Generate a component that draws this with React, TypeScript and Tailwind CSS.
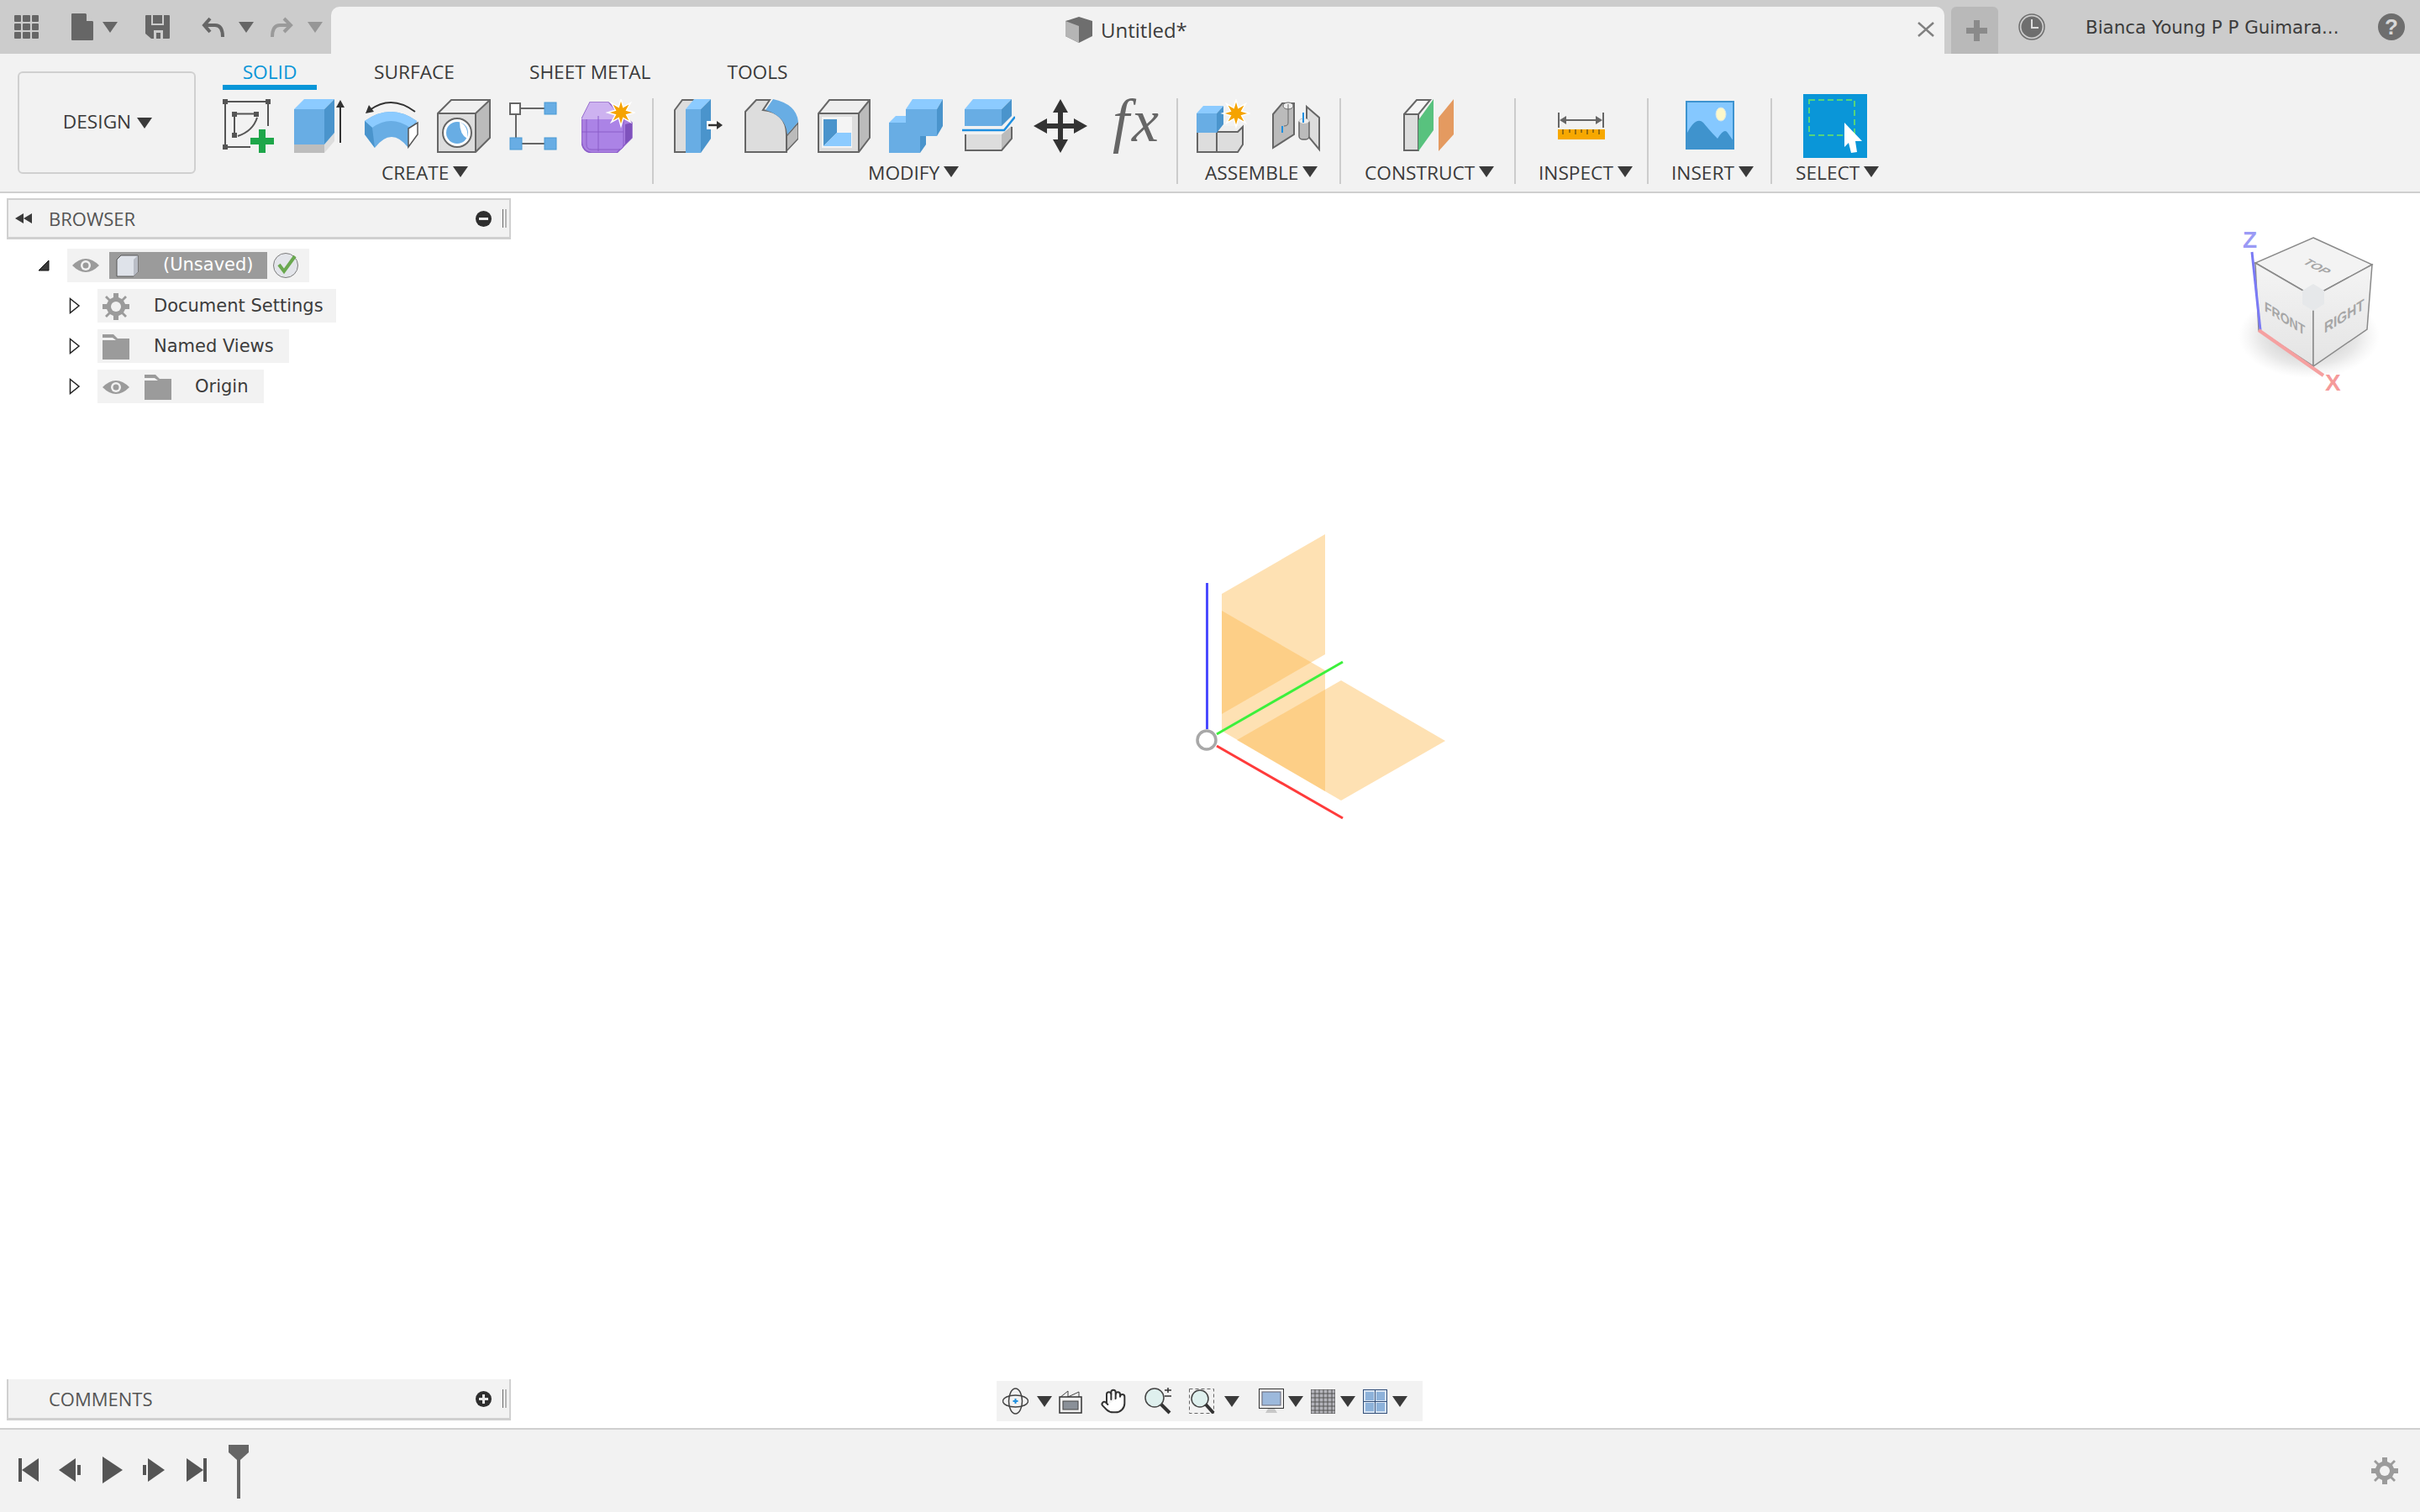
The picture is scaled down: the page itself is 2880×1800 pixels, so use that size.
import type { ReactNode } from "react";
import { Hand } from "lucide-react";

type IcoProps = { x: number; y?: number; w?: number; h?: number; className?: string; children: ReactNode };

// viewBox uses screen coordinates so shapes can be read straight off the reference
function Ico({ x, y = 118, w = 64, h = 64, className = "", children }: IcoProps) {
  return (
    <svg width={w} height={h} viewBox={`${x} ${y} ${w} ${h}`} className={`block shrink-0 ${className}`}>
      {children}
    </svg>
  );
}

const TOP = "#8ccbff";
const FRONT = "#68ade4";
const SIDE = "#4a94cc";
const EDGE = "#666666";

function Caret({ className = "", color = "border-t-[#3a3a3a]" }: { className?: string; color?: string }) {
  return (
    <span
      className={`block h-0 w-0 border-x-[9px] border-t-[13px] border-x-transparent ${color} ${className}`}
    />
  );
}

function Star({ cx, cy, r }: { cx: number; cy: number; r: number }) {
  const pts: string[] = [];
  for (let i = 0; i < 16; i++) {
    const rad = i % 2 === 0 ? r : r * 0.45;
    const a = (i * Math.PI) / 8;
    pts.push(`${cx + rad * Math.sin(a)},${cy - rad * Math.cos(a)}`);
  }
  return <polygon points={pts.join(" ")} fill="#f5a300" stroke="#ffffff" strokeWidth="1.5" />;
}

function TitleBar() {
  return (
    <div className="flex h-[64px] shrink-0 bg-[#cccccc]">
      <div className="flex w-[394px] shrink-0 items-center pl-[17px]">
        <div className="grid h-[28px] w-[29px] grid-cols-3 gap-[2px]">
          {Array.from({ length: 9 }).map((_, i) => (
            <span key={i} className="rounded-[1px] bg-[#666666]" />
          ))}
        </div>
        <Ico x={85} y={16} w={26} h={32} className="ml-[39px]">
          <path d="M85 17 Q85 16 86 16 H102 L111 26 V47 Q111 48 110 48 H86 Q85 48 85 47 Z" fill="#666666" />
          <path d="M103 16 L111 25 H103 Z" fill="#cccccc" />
        </Ico>
        <Caret className="ml-[11px]" color="border-t-[#666666]" />
        <Ico x={173} y={18} w={29} h={28} className="ml-[33px]">
          <path d="M173 19 Q173 18 174 18 H201 Q202 18 202 19 V45 Q202 46 201 46 H180 L173 40 Z" fill="#666666" />
          <path d="M181 18 V29 H194 V18" fill="none" stroke="#cccccc" strokeWidth="2" />
          <path d="M183 46 V36 H194 V46 H191 V39 H186 V46 Z" fill="#cccccc" />
        </Ico>
        <Ico x={240} y={20} w={28} h={25} className="ml-[38px]">
          <path d="M250 22 L243 30 L250 38" fill="none" stroke="#666666" strokeWidth="4" />
          <path d="M245 30 H256 Q265 30 265 44" fill="none" stroke="#666666" strokeWidth="4" />
        </Ico>
        <Caret className="ml-[16px]" color="border-t-[#666666]" />
        <Ico x={322} y={20} w={28} h={25} className="ml-[20px]">
          <path d="M338 22 L346 30 L338 38" fill="none" stroke="#9a9a9a" strokeWidth="4" />
          <path d="M344 30 H333 Q324 30 324 44" fill="none" stroke="#9a9a9a" strokeWidth="4" />
        </Ico>
        <Caret className="ml-[16px]" color="border-t-[#969696]" />
      </div>
      <div className="mt-[8px] flex w-[1920px] shrink-0 items-center rounded-t-[10px] bg-[#f2f2f2] pb-[1px] pl-[874px]">
        <Ico x={1268} y={20} w={32} h={33}>
          <path d="M1268 26 L1284 21 L1300 26 V44 L1284 52 L1268 44 Z" fill="#6e6e6e" />
          <path d="M1268 26 L1284 32 V52 L1268 44 Z" fill="#b5b5b5" />
        </Ico>
        <span className="ml-[10px] font-['Open_Sans',sans-serif] text-[24px] text-[#3c3c3c]">Untitled*</span>
        <svg width="20" height="18" viewBox="0 0 20 18" className="ml-auto mr-[12px] mt-[-1px] shrink-0">
          <path d="M1 1 L19 17 M19 1 L1 17" stroke="#808080" strokeWidth="2.5" />
        </svg>
      </div>
      <div className="ml-[8px] mt-[8px] flex w-[56px] shrink-0 items-center justify-center rounded-t-[6px] bg-[#b9b9b9]">
        <svg width="25" height="25" viewBox="0 0 25 25" className="ml-[5px]">
          <path d="M0 12.5 H25 M12.5 0 V25" stroke="#8a8a8a" strokeWidth="7" />
        </svg>
      </div>
      <svg width="32" height="32" viewBox="0 0 32 32" className="ml-[24px] mt-[16px] shrink-0">
        <circle cx="16" cy="16" r="15" fill="none" stroke="#6e6e6e" strokeWidth="1.5" />
        <circle cx="16" cy="16" r="12.5" fill="#6e6e6e" />
        <path d="M16 7 V17 H24" fill="none" stroke="#dddddd" strokeWidth="2" />
      </svg>
      <span className="ml-[48px] mt-[18px] whitespace-nowrap font-['DejaVu_Sans',sans-serif] text-[21.4px] leading-[30px] text-[#3c3c3c]">
        Bianca Young P P Guimara...
      </span>
      <div className="ml-auto mr-[18px] mt-[16px] flex h-[32px] w-[32px] items-center justify-center rounded-full bg-[#6e6e6e] font-['Liberation_Sans',sans-serif] text-[26px] font-bold text-[#d8d8d8]">
        ?
      </div>
    </div>
  );
}

function GroupLabel({ text, className }: { text: string; className: string }) {
  return (
    <div className={`mt-[12px] flex h-[24px] items-center whitespace-nowrap text-[22.7px] text-[#3a3a3a] ${className}`}>
      {text}
      <Caret className="ml-[5px] mt-[-3px]" />
    </div>
  );
}

function Sep() {
  return <div className="mt-[5px] h-[102px] w-[2px] shrink-0 bg-[#cccccc]" />;
}

function CreateGroup() {
  return (
    <div className="w-[522px] shrink-0">
      <div className="flex h-[70px] pt-[6px]">
        <Ico x={264} className="ml-[10px]">
          <g fill="#555555">
            {[[265, 118], [316, 118], [265, 172], [276, 133], [302, 133], [276, 158]].map(([x, y]) => (
              <rect key={`${x}-${y}`} x={x} y={y} width="6" height="6" />
            ))}
          </g>
          <path
            d="M271 121 H316 M268 124 V172 M271 175 H298 M319 124 V150 M282 135.500 H302 M279 139 V158 M283 162 Q301 156 306 140"
            fill="none"
            stroke="#555555"
            strokeWidth="2"
          />
          <path d="M312 154 V182 M298 168 H326" stroke="#1ea64a" strokeWidth="8" />
        </Ico>
        <Ico x={348} className="ml-[20px]">
          <polygon points="350,172 386,172 386,182 350,182" fill="#bdbdbd" />
          <polygon points="386,172 398,158 398,168 386,182" fill="#dddddd" />
          <polygon points="350,130 362,118 398,118 386,130" fill={TOP} />
          <rect x="350" y="130" width="36" height="42" fill={FRONT} />
          <polygon points="386,130 398,118 398,158 386,172" fill={SIDE} />
          <path d="M405 170 V126" stroke="#333333" strokeWidth="2" />
          <polygon points="400,128 405,119 410,128" fill="#333333" />
        </Ico>
        <Ico x={434} className="ml-[22px]">
          <path d="M440 131 Q466 112 494 133" fill="none" stroke="#333333" strokeWidth="2" />
          <polygon points="435,135 439,125 445,133" fill="#333333" />
          <path d="M434 144 Q465 122 496 144 L486 176 Q466 150 446 176 L434 160 Z" fill={FRONT} />
          <path d="M434 144 Q465 122 496 144 L488 152 Q465 136 443 152 Z" fill={TOP} />
          <path d="M434 144 L443 152 L446 176 L434 160 Z" fill={SIDE} />
          <path d="M486 153 L497 146 V160 L486 175 Z" fill="#ffffff" stroke="#555555" strokeWidth="1.5" />
        </Ico>
        <Ico x={520} className="ml-[22px]">
          <polygon points="521,135 537,119 583,119 566,135" fill="#f0f0f0" />
          <rect x="521" y="135" width="45" height="46" fill="#dddddd" />
          <polygon points="566,135 583,119 583,164 566,181" fill="#bbbbbb" />
          <path d="M521 181 V135 L537 119 H583 V164 L566 181 Z M521 135 H566 L583 119 M566 135 V181" fill="none" stroke={EDGE} strokeWidth="2" />
          <circle cx="544" cy="158" r="17" fill="#ffffff" stroke={EDGE} strokeWidth="2" />
          <circle cx="544" cy="158" r="13" fill={FRONT} />
          <path d="M547 145 Q547 160 556 165 Q558 150 547 145 Z" fill="#ffffff" />
        </Ico>
        <Ico x={602} className="ml-[18px]">
          <path d="M619 129 H648 M614 136 V164 M621 171 H648" stroke="#666666" strokeWidth="2" />
          <rect x="607" y="123" width="12" height="13" fill="#ffffff" stroke="#666666" strokeWidth="2" />
          {[[648, 122], [607, 164], [648, 164]].map(([x, y]) => (
            <rect key={`${x}-${y}`} x={x} y={y} width="14" height="14" fill={FRONT} stroke="#4a9ad4" />
          ))}
        </Ico>
        <Ico x={692} className="ml-[26px]">
          <path d="M692 142 L702 122 H724 L752 146 V164 L734 182 H704 Q692 180 692 166 Z" fill="#a97fe0" stroke="#8a5cc8" strokeWidth="1.5" />
          <path d="M698 143 Q698 138 703 138 H742 V172 Q742 178 736 178 H704 Q698 178 698 172 Z" fill="#ab83e6" stroke="#8a5cc8" strokeWidth="1" />
          <path d="M702 122 L692 142 H740 L724 122 Z" fill="#cdb2f0" />
          <path d="M692 157 H742 M712 138 V180" stroke="#8a5cc8" strokeWidth="1" fill="none" />
          <polygon points="744,148 752,146 752,164 744,172" fill="#7f52bd" />
          <Star cx={739} cy={134} r={16} />
        </Ico>
      </div>
      <GroupLabel text="CREATE" className="ml-[200px]" />
    </div>
  );
}

function ModifyGroup() {
  return (
    <div className="w-[622px] shrink-0">
      <div className="flex h-[70px] gap-[22px] pl-[22px] pt-[6px]">
        <Ico x={800}>
          <path d="M803 181 V131 L812 119 H826 V181 Z" fill="#dddddd" stroke={EDGE} strokeWidth="2" />
          <polygon points="816,130 826,118 846,118 834,130" fill={TOP} />
          <rect x="816" y="130" width="18" height="52" fill={FRONT} />
          <polygon points="834,130 846,118 846,165 834,182" fill={SIDE} />
          <rect x="841" y="144" width="11" height="10" fill="#ffffff" />
          <path d="M843 149 H855" stroke="#333333" strokeWidth="2.5" />
          <polygon points="853,144 860,149 853,154" fill="#333333" />
        </Ico>
        <Ico x={886}>
          <polygon points="936,162 950,146 950,165 934,182" fill="#bbbbbb" stroke={EDGE} strokeWidth="1.5" />
          <path d="M887 181 V133 L900 119 H916 L908 131 Q936 134 936 160 V181 Z" fill="#dddddd" stroke={EDGE} strokeWidth="2" />
          <path d="M920 118 Q948 124 950 145 L937 160 Q935 138 911 131 Z" fill={FRONT} />
        </Ico>
        <Ico x={972}>
          <polygon points="974,135 987,119 1035,119 1022,135" fill="#eeeeee" />
          <rect x="974" y="135" width="48" height="46" fill="#dddddd" />
          <polygon points="1022,135 1035,119 1035,164 1022,181" fill="#bbbbbb" />
          <path d="M974 181 V135 L987 119 H1035 V164 L1022 181 Z M974 135 H1022 L1035 119 M1022 135 V181" fill="none" stroke={EDGE} strokeWidth="2" />
          <rect x="978" y="139" width="36" height="37" fill="#f4f4f4" />
          <polygon points="980,142 996,142 996,158 980,174" fill={SIDE} />
          <polygon points="980,174 996,158 1013,158 1013,174" fill={TOP} />
        </Ico>
        <Ico x={1058}>
          <polygon points="1078,130 1086,118 1122,118 1115,130" fill={TOP} />
          <rect x="1078" y="130" width="37" height="32" fill={FRONT} />
          <polygon points="1115,130 1122,118 1122,150 1115,162" fill={SIDE} />
          <polygon points="1058,146 1066,138 1078,138 1078,146" fill={TOP} />
          <rect x="1058" y="146" width="37" height="36" fill={FRONT} />
          <polygon points="1095,162 1102,162 1102,172 1095,182" fill={SIDE} />
        </Ico>
        <Ico x={1144}>
          <polygon points="1148,130 1158,118 1204,118 1192,130" fill={TOP} />
          <rect x="1148" y="130" width="44" height="20" fill={FRONT} />
          <polygon points="1192,130 1204,118 1204,138 1192,150" fill={SIDE} />
          <path d="M1145 155 H1195 L1208 139" fill="none" stroke="#1e8fe0" strokeWidth="2.500" />
          <polygon points="1192,160 1204,150 1204,165 1192,179" fill="#bbbbbb" />
          <rect x="1149" y="160" width="43" height="19" fill="#dddddd" />
          <path d="M1149 160 V179 H1192 L1204 165 V151" fill="none" stroke={EDGE} strokeWidth="2" />
        </Ico>
        <Ico x={1230}>
          <path d="M1262 130 V170 M1246 150 H1278" stroke="#333333" strokeWidth="6" />
          <polygon points="1262,118 1253,134 1271,134" fill="#333333" />
          <polygon points="1262,182 1253,166 1271,166" fill="#333333" />
          <polygon points="1230,150 1246,141 1246,159" fill="#333333" />
          <polygon points="1294,150 1278,141 1278,159" fill="#333333" />
        </Ico>
        <Ico x={1316} className="overflow-visible">
          <text x="1324" y="168" fontFamily="'Liberation Serif', serif" fontStyle="italic" fontSize="72" letterSpacing="3" fill="#666666">
            fx
          </text>
        </Ico>
      </div>
      <GroupLabel text="MODIFY" className="ml-[255px]" />
    </div>
  );
}

function AssembleGroup() {
  return (
    <div className="w-[192px] shrink-0">
      <div className="flex h-[70px] gap-[22px] pl-[22px] pt-[6px]">
        <Ico x={1424}>
          <rect x="1425" y="157" width="23" height="24" fill="#dddddd" stroke={EDGE} strokeWidth="2" />
          <polygon points="1448,157 1456,150 1479,150 1473,157" fill="#eeeeee" />
          <path d="M1448 157 V181 H1473 L1479 172 V151 L1473 157 H1448" fill="#dddddd" stroke={EDGE} strokeWidth="2" />
          <polygon points="1424,135 1432,126 1456,126 1448,135" fill={TOP} />
          <rect x="1424" y="135" width="24" height="23" fill={FRONT} />
          <polygon points="1448,135 1456,126 1456,148 1448,158" fill={SIDE} />
          <Star cx={1471} cy={135} r={16} />
        </Ico>
        <Ico x={1510}>
          <path d="M1515 136 L1526 123 H1540 V160 L1515 176 Z" fill="#bbbbbb" stroke={EDGE} strokeWidth="2" />
          <ellipse cx="1533" cy="126" rx="6" ry="4" fill="#eeeeee" stroke={EDGE} />
          <path d="M1533 124 V146 Q1533 150 1528 150" fill="none" stroke={EDGE} />
          <path d="M1526 150 V158" stroke="#1e8fe0" strokeWidth="2" />
          <path d="M1555 127 L1570 140 V178 L1555 160 Z" fill="#dddddd" stroke={EDGE} strokeWidth="2" />
          <rect x="1546" y="142" width="12" height="24" rx="4" fill="#bbbbbb" stroke={EDGE} strokeWidth="1.5" />
          <ellipse cx="1552" cy="144" rx="6" ry="3" fill="#eeeeee" />
          <path d="M1551 134 V146" stroke="#1e8fe0" strokeWidth="2" />
        </Ico>
      </div>
      <GroupLabel text="ASSEMBLE" className="ml-[32px]" />
    </div>
  );
}

function ConstructGroup() {
  return (
    <div className="w-[206px] shrink-0">
      <div className="flex h-[70px] pl-[72px] pt-[6px]">
        <Ico x={1668}>
          <path d="M1671 179 V136 L1686 119 H1702 L1688 136 Z" fill="#f6f6f6" stroke={EDGE} strokeWidth="2" />
          <polygon points="1671,136 1688,136 1688,179 1671,179" fill="#dddddd" stroke={EDGE} strokeWidth="2" />
          <polygon points="1688,180 1706,155 1706,118 1688,143" fill="#58c27e" />
          <polygon points="1712,180 1730,160 1730,118 1712,140" fill="#e49a60" />
        </Ico>
      </div>
      <GroupLabel text="CONSTRUCT" className="ml-[28px]" />
    </div>
  );
}

function InspectGroup() {
  return (
    <div className="w-[156px] shrink-0">
      <div className="flex h-[70px] pl-[46px] pt-[6px]">
        <Ico x={1850}>
          <path d="M1855 134 V152 M1908 134 V152 M1860 143 H1903" stroke="#666666" strokeWidth="2" />
          <polygon points="1856,143 1864,138 1864,148" fill="#666666" />
          <polygon points="1907,143 1899,138 1899,148" fill="#666666" />
          <rect x="1854" y="154" width="56" height="12" fill="#f7a800" />
          <path d="M1860 154 V160 M1868 154 V158 M1875 154 V160 M1882 154 V158 M1889 154 V160 M1896 154 V158 M1903 154 V160" stroke="#7a5a10" strokeWidth="1.500" />
        </Ico>
      </div>
      <GroupLabel text="INSPECT" className="ml-[27px]" />
    </div>
  );
}

function InsertGroup() {
  return (
    <div className="w-[145px] shrink-0">
      <div className="flex h-[70px] pl-[41px] pt-[6px]">
        <Ico x={2003}>
          <rect x="2007" y="121" width="56" height="56" fill="#85c8ff" stroke="#3d93cf" strokeWidth="2" />
          <ellipse cx="2048" cy="136" rx="6" ry="8" fill="#fdf8c9" stroke="#cfe4ee" />
          <path d="M2007 160 Q2018 138 2027 146 Q2037 158 2044 165 Q2052 152 2056 158 L2063 168 V177 H2007 Z" fill="#3f93cd" />
        </Ico>
      </div>
      <GroupLabel text="INSERT" className="ml-[27px]" />
    </div>
  );
}

function SelectGroup() {
  return (
    <div className="w-[160px] shrink-0">
      <div className="flex h-[70px] pl-[37px]">
        <Ico x={2146} y={112} w={76} h={76}>
          <rect x="2146" y="112" width="76" height="76" fill="#0a96d8" />
          <rect x="2153" y="119" width="54" height="42" fill="none" stroke="#55d47c" strokeWidth="2" strokeDasharray="7 4" />
          <polygon points="2195,146 2216,168 2208,168 2210,181 2203,182 2200,170 2195,175" fill="#ffffff" />
        </Ico>
      </div>
      <GroupLabel text="SELECT" className="ml-[28px]" />
    </div>
  );
}

function Ribbon() {
  return (
    <div className="flex h-[166px] shrink-0 border-b-2 border-[#cfcfcf] bg-[#f2f2f2] font-['Open_Sans',sans-serif]">
      <div className="ml-[21px] mt-[21px] flex h-[122px] w-[212px] shrink-0 items-center justify-center rounded-[6px] border-2 border-[#d0d0d0] pb-[2px] pl-[2px] text-[22.7px] text-[#3a3a3a]">
        DESIGN
        <Caret className="ml-[7px] mt-[2px]" />
      </div>
      <div className="ml-[21px] flex-1">
        <div className="relative h-[48px] text-[22.7px] text-[#3a3a3a]">
          <div className="flex items-start pt-[6px]">
            <div className="ml-[11px] flex w-[112px] flex-col items-center">
              <span className="leading-[31px] text-[#0996d8]">SOLID</span>
              <span className="h-[6px] w-full bg-[#0996d8]" />
            </div>
            <span className="ml-[68px] leading-[31px]">SURFACE</span>
            <span className="ml-[89px] leading-[31px]">SHEET METAL</span>
            <span className="ml-[91px] leading-[31px]">TOOLS</span>
          </div>
        </div>
        <div className="flex">
          <CreateGroup />
          <Sep />
          <ModifyGroup />
          <Sep />
          <AssembleGroup />
          <Sep />
          <ConstructGroup />
          <Sep />
          <InspectGroup />
          <Sep />
          <InsertGroup />
          <Sep />
          <SelectGroup />
        </div>
      </div>
    </div>
  );
}

function Grip() {
  return (
    <div className="ml-[13px] flex h-[22px] gap-[2px]">
      <span className="w-[1px] bg-[#666666]" />
      <span className="w-[2px] bg-[#b5b5b5]" />
    </div>
  );
}

function RoundBadge({ plus }: { plus?: boolean }) {
  return (
    <svg width="19" height="19" viewBox="0 0 19 19" className="ml-auto shrink-0">
      <circle cx="9.500" cy="9.500" r="9.500" fill="#2e2e2e" />
      <path d={plus ? "M4 9.500 H15 M9.500 4 V15" : "M4 9.500 H15"} stroke="#e8e8e8" strokeWidth="3" />
    </svg>
  );
}

function Eye() {
  return (
    <svg width="32" height="18" viewBox="0 0 32 18" className="shrink-0">
      <path d="M0 9 Q16 -7 32 9 Q16 25 0 9 Z" fill="#9b9b9b" />
      <circle cx="16" cy="9" r="6" fill="#f2f2f2" />
      <circle cx="16" cy="9" r="3.500" fill="#9b9b9b" />
    </svg>
  );
}

function Folder({ className = "" }: { className?: string }) {
  return (
    <svg width="32" height="30" viewBox="0 0 32 30" className={`shrink-0 ${className}`}>
      <path d="M0 0 H13 L18 5 H32 V30 H0 Z" fill="#9b9b9b" />
      <path d="M0 4 H12 L16 7 H0 Z" fill="#f2f2f2" />
    </svg>
  );
}

function Expander() {
  return (
    <svg width="14" height="20" viewBox="0 0 14 20" className="shrink-0">
      <path d="M1.500 1.500 L12 10 L1.500 18.500 Z" fill="#ffffff" stroke="#222222" strokeWidth="1.500" />
    </svg>
  );
}

function TreeRow({ children, width }: { children: ReactNode; width: string }) {
  return (
    <div className="ml-[74px] mt-[8px] flex h-[40px] items-center">
      <Expander />
      <div className={`ml-[20px] flex h-full items-center bg-[#f2f2f2] pl-[6px] pt-[1px] text-[#3c3c3c] ${width}`}>{children}</div>
    </div>
  );
}

function Browser() {
  return (
    <div className="w-[600px]">
      <div className="flex h-[49px] items-center border-x-2 border-t-2 border-b-[3px] border-[#d0d0d0] bg-[#f2f2f2] pl-[8px] pr-[3px] font-['Open_Sans',sans-serif] text-[22px] text-[#555555]">
        <svg width="20" height="12" viewBox="0 0 20 12" className="shrink-0">
          <path d="M10 0 L0 6 L10 12 Z M20 0 L10 6 L20 12 Z" fill="#3a3a3a" />
        </svg>
        <span className="ml-[20px]">BROWSER</span>
        <RoundBadge />
        <Grip />
      </div>
      <div className="font-['DejaVu_Sans',sans-serif] text-[21px]">
        <div className="ml-[37px] mt-[11px] flex h-[40px] items-center">
          <svg width="14" height="14" viewBox="0 0 14 14" className="shrink-0">
            <path d="M13 1 V13 H1 Z" fill="#3a3a3a" stroke="#111111" />
          </svg>
          <div className="ml-[21px] flex h-full w-[288px] items-center bg-[#f2f2f2] pl-[6px]">
            <Eye />
            <div className="ml-[12px] flex h-[32px] w-[188px] items-center bg-[#9b9b9b] pl-[8px] text-white">
              <svg width="27" height="27" viewBox="0 0 27 27" className="shrink-0">
                <path d="M1 6 L6 1 H26 V21 L21 26 H1 Z" fill="#dfe3ea" stroke="#555555" />
                <path d="M21 6 L26 1 V21 L21 26 Z" fill="#b9bdc6" />
              </svg>
              <span className="ml-[29px]">(Unsaved)</span>
            </div>
            <svg width="32" height="32" viewBox="0 0 32 32" className="ml-[6px] shrink-0">
              <circle cx="16" cy="16" r="14.500" fill="#e3e5ea" stroke="#7c7c7c" />
              <path d="M8 15 L14 23 L27 5" fill="none" stroke="#6aa84f" strokeWidth="4" />
            </svg>
          </div>
        </div>
        <TreeRow width="w-[284px]">
          <svg width="32" height="32" viewBox="0 0 32 32" className="shrink-0">
            <path
              d="M13 0 H19 V5 L23 7 L27 3 L29 5 L25 9 L27 13 H32 V19 H27 L25 23 L29 27 L27 29 L23 25 L19 27 V32 H13 V27 L9 25 L5 29 L3 27 L7 23 L5 19 H0 V13 H5 L7 9 L3 5 L5 3 L9 7 L13 5 Z"
              fill="#9b9b9b"
            />
            <circle cx="16" cy="16" r="6" fill="#f2f2f2" />
          </svg>
          <span className="ml-[29px] whitespace-nowrap">Document Settings</span>
        </TreeRow>
        <TreeRow width="w-[228px]">
          <Folder />
          <span className="ml-[29px] whitespace-nowrap">Named Views</span>
        </TreeRow>
        <TreeRow width="w-[198px]">
          <Eye />
          <Folder className="ml-[18px]" />
          <span className="ml-[28px] whitespace-nowrap">Origin</span>
        </TreeRow>
      </div>
    </div>
  );
}

function Comments() {
  return (
    <div className="flex h-[49px] w-[600px] items-center border-x-2 border-b-[3px] border-[#d0d0d0] bg-[#f2f2f2] pl-[48px] pr-[3px] font-['Open_Sans',sans-serif] text-[22px] text-[#555555]">
      COMMENTS
      <RoundBadge plus />
      <Grip />
    </div>
  );
}

function Axes() {
  return (
    <svg width="340" height="370" viewBox="1400 620 340 370" className="absolute left-[1400px] top-[390px]">
      <g fill="#fdb74a" fillOpacity="0.42">
        <polygon points="1454,707 1577,636 1577,779 1454,850" />
        <polygon points="1454,727 1577,798 1577,942 1454,870" />
        <polygon points="1472,881 1596,810 1720,882 1596,953" />
      </g>
      <path d="M1436.500 694 V868" stroke="#4a4aff" strokeWidth="3" />
      <path d="M1448 874 L1598 788" stroke="#3cf03c" strokeWidth="3" />
      <path d="M1448 888 L1598 974" stroke="#ff3b3b" strokeWidth="3" />
      <circle cx="1436" cy="881" r="11" fill="#ffffff" stroke="#a8a8a8" strokeWidth="3.500" />
    </svg>
  );
}

function ViewCube() {
  return (
    <svg width="240" height="230" viewBox="2640 250 240 230" className="absolute left-[2640px] top-[20px]">
      <defs>
        <radialGradient id="cube-shadow">
          <stop offset="0%" stopColor="#777777" stopOpacity="0.55" />
          <stop offset="70%" stopColor="#999999" stopOpacity="0.22" />
          <stop offset="100%" stopColor="#bbbbbb" stopOpacity="0" />
        </radialGradient>
        <linearGradient id="cube-face" x1="0" y1="0" x2="0" y2="1">
          <stop offset="0%" stopColor="#f4f4f4" />
          <stop offset="100%" stopColor="#e4e4e4" />
        </linearGradient>
      </defs>
      <ellipse cx="2748" cy="400" rx="84" ry="50" fill="url(#cube-shadow)" />
      <polygon points="2753,283 2823,315 2753,353 2684,313" fill="#f3f3f3" stroke="#8a8a8a" strokeWidth="1.500" />
      <polygon points="2684,313 2753,353 2753,436 2688,393" fill="url(#cube-face)" stroke="#8a8a8a" strokeWidth="1.500" />
      <polygon points="2753,353 2823,315 2817,392 2753,436" fill="url(#cube-face)" stroke="#8a8a8a" strokeWidth="1.500" />
      <polygon points="2753,338 2766,346 2766,362 2753,370 2740,362 2740,346" fill="#e6e8ea" />
      <g fontFamily="'Liberation Sans', sans-serif" fontWeight="bold" fill="#a6a6a6">
        <text transform="matrix(0.88,0.47,-0.88,0.47,2753,320)" textAnchor="middle" fontSize="15">TOP</text>
        <text transform="matrix(0.85,0.52,0,1,2695,370)" fontSize="16.500">FRONT</text>
        <text transform="matrix(0.85,-0.52,0,1,2766,397)" fontSize="18">RIGHT</text>
      </g>
      <path d="M2680 300 L2690 393" stroke="#7a7af5" strokeWidth="3" />
      <path d="M2688 393 L2765 447" stroke="#f5a0a0" strokeWidth="4" />
      <text x="2669" y="295" fontFamily="'Liberation Sans', sans-serif" fontWeight="bold" fontSize="28" fill="#9a9af5">Z</text>
      <text x="2767" y="465" fontFamily="'Liberation Sans', sans-serif" fontWeight="bold" fontSize="28" fill="#f59a9a">X</text>
    </svg>
  );
}

function NavBar() {
  return (
    <div className="absolute bottom-[8px] left-[1186px] flex h-[48px] w-[507px] items-center bg-[#f2f2f2] pl-[7px]">
      <svg width="31" height="32" viewBox="0 0 31 32" className="shrink-0">
        <ellipse cx="15.500" cy="16" rx="8" ry="15" fill="none" stroke="#444444" strokeWidth="1.500" />
        <ellipse cx="15.500" cy="16" rx="15" ry="7" fill="none" stroke="#444444" strokeWidth="1.500" />
        <path d="M15.500 13 V19 M12.500 16 H18.500" stroke="#1e8fe0" strokeWidth="2" />
      </svg>
      <Caret className="ml-[10px]" />
      <svg width="28" height="30" viewBox="0 0 28 30" className="ml-[8px] shrink-0">
        <path d="M1 11 L11 3 V10 L24 4 V11 Z" fill="#f0f0f0" stroke="#444444" />
        <rect x="1" y="10" width="26" height="19" fill="#f0f0f0" stroke="#333333" strokeWidth="1.500" />
        <rect x="5" y="15" width="18" height="10" fill="#8a9098" stroke="#444444" />
      </svg>
      <Hand size={32} fill="#ffffff" stroke="#333333" strokeWidth={1.5} className="ml-[21px] shrink-0" />
      <svg width="32" height="32" viewBox="0 0 32 32" className="ml-[21px] shrink-0">
        <circle cx="12" cy="12" r="11" fill="#dff0ee" stroke="#444444" strokeWidth="1.500" />
        <path d="M20 20 L30 30" stroke="#333333" strokeWidth="4" />
        <path d="M24 3 H32 M28 0 V6 M24 10 H32" stroke="#333333" strokeWidth="1.500" />
      </svg>
      <svg width="31" height="31" viewBox="0 0 31 31" className="ml-[21px] shrink-0">
        <rect x="0.500" y="0.500" width="29" height="29" fill="none" stroke="#666666" strokeDasharray="4 3" />
        <circle cx="13" cy="12" r="10" fill="#dff0ee" stroke="#444444" strokeWidth="1.500" />
        <path d="M20 19 L29 29" stroke="#333333" strokeWidth="4" />
      </svg>
      <Caret className="ml-[11px]" />
      <svg width="30" height="31" viewBox="0 0 30 31" className="ml-[23px] shrink-0">
        <rect x="0.500" y="0.500" width="29" height="23" fill="#f0f0f0" stroke="#333333" />
        <rect x="4" y="4" width="22" height="16" fill="#9db9dc" stroke="#667" />
        <path d="M11 24 H19 L22 29 H8 Z" fill="#c8c8c8" />
      </svg>
      <Caret className="ml-[5px]" />
      <svg width="29" height="29" viewBox="0 0 29 29" className="ml-[9px] shrink-0">
        <rect width="29" height="29" fill="#b4b4ba" stroke="#444444" />
        <path
          d="M5 0 V29 M10 0 V29 M15 0 V29 M20 0 V29 M25 0 V29 M0 5 H29 M0 10 H29 M0 15 H29 M0 20 H29 M0 25 H29"
          stroke="#555555"
          strokeWidth="1"
        />
      </svg>
      <Caret className="ml-[6px]" />
      <svg width="29" height="29" viewBox="0 0 29 29" className="ml-[9px] shrink-0">
        <rect x="0.500" y="0.500" width="28" height="28" fill="#d8e4f2" stroke="#33507a" />
        <rect x="3" y="3" width="10" height="10" fill="#8db2da" />
        <rect x="16" y="3" width="10" height="10" fill="#8db2da" />
        <rect x="3" y="16" width="10" height="10" fill="#8db2da" />
        <rect x="16" y="16" width="10" height="10" fill="#8db2da" />
        <path d="M14.500 0 V29 M0 14.500 H29" stroke="#33507a" />
      </svg>
      <Caret className="ml-[6px]" />
    </div>
  );
}

function Timeline() {
  return (
    <div className="flex h-[100px] shrink-0 border-t-2 border-[#cfcfcf] bg-[#f2f2f2]">
      <svg width="300" height="98" viewBox="0 1702 300 98" className="shrink-0">
        <g fill="#555555">
          <rect x="22" y="1736" width="4" height="28" />
          <polygon points="26,1750 46,1736 46,1764" />
          <polygon points="70,1750 90,1736 90,1764" />
          <rect x="92" y="1744" width="4" height="12" />
          <polygon points="122,1734 146,1750 122,1766" />
          <rect x="170" y="1744" width="4" height="12" />
          <polygon points="176,1736 196,1750 176,1764" />
          <polygon points="222,1736 242,1750 222,1764" />
          <rect x="242" y="1736" width="4" height="28" />
        </g>
        <polygon points="272,1720 296,1720 296,1729 286,1738 282,1738 272,1729" fill="#666666" />
        <rect x="282" y="1736" width="4" height="48" fill="#666666" />
      </svg>
      <svg width="32" height="32" viewBox="0 0 32 32" className="ml-auto mr-[26px] mt-[33px] shrink-0">
        <path
          d="M13 0 H19 V5 L23 7 L27 3 L29 5 L25 9 L27 13 H32 V19 H27 L25 23 L29 27 L27 29 L23 25 L19 27 V32 H13 V27 L9 25 L5 29 L3 27 L7 23 L5 19 H0 V13 H5 L7 9 L3 5 L5 3 L9 7 L13 5 Z"
          fill="#9b9b9b"
        />
        <circle cx="16" cy="16" r="6" fill="#f2f2f2" />
      </svg>
    </div>
  );
}

export default function App() {
  return (
    <div className="flex h-[1800px] w-[2880px] flex-col overflow-hidden bg-white">
      <TitleBar />
      <Ribbon />
      <div className="relative flex flex-1 flex-col justify-between pb-[9px] pl-[8px] pt-[6px]">
        <Browser />
        <Comments />
        <Axes />
        <ViewCube />
        <NavBar />
      </div>
      <Timeline />
    </div>
  );
}
